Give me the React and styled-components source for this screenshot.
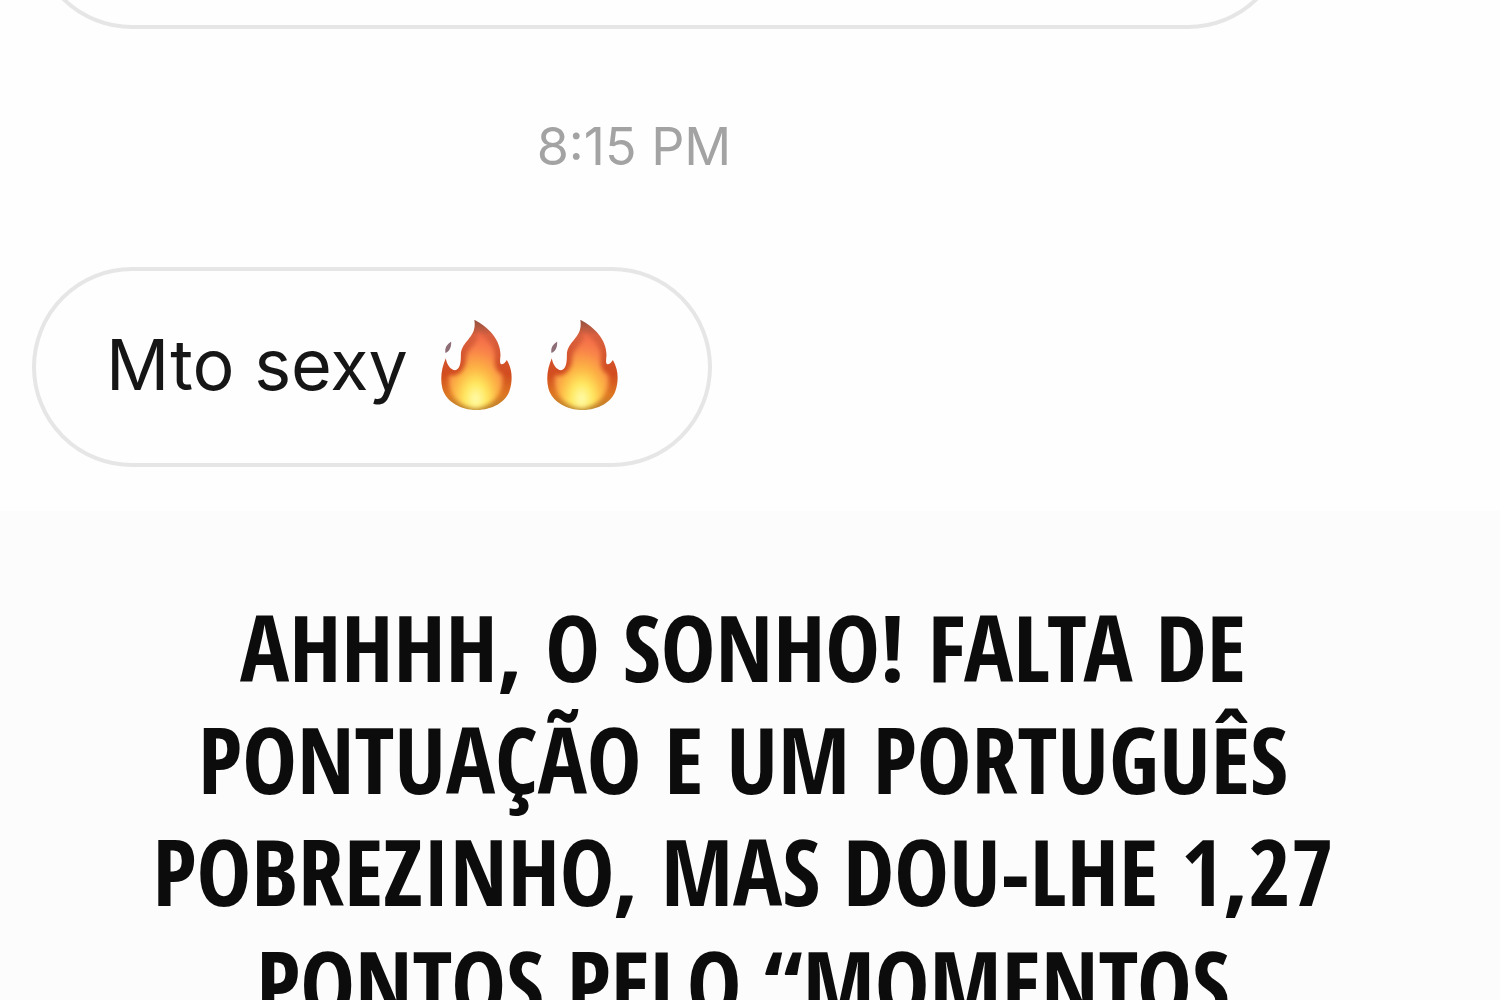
import React from "react";
import styled, { createGlobalStyle } from "styled-components";

const GlobalStyle = createGlobalStyle`
  body {
    margin: 0;
    background: #fcfcfc;
  }
`;

const Page = styled.main`
  height: 100vh;
  overflow: hidden;
  color: #161616;
  font-family: Inter, "Liberation Sans", sans-serif;
`;

const Chat = styled.section`
  background: #fefefe;
  padding: 0 212px 44px 32px;
`;

// shows only the lower edge of a message scrolled off the top
const Scrolled = styled.div`
  display: flex;
  align-items: flex-end;
  height: 29px;
  overflow: hidden;
`;

const Bubble = styled.div`
  box-sizing: border-box;
  display: flex;
  flex-shrink: 0;
  align-items: center;
  gap: 32px;
  width: ${(props) => (props.$wide ? "100%" : "fit-content")};
  height: 200px;
  padding: 0 88px 4px 70px;
  border: 4px solid #e6e6e6;
  border-radius: 100px;
  background: #fefefe;
`;

const Time = styled.time`
  display: block;
  padding: 88px 52px 90px 0;
  color: #a3a3a3;
  font-size: 52px;
  line-height: 60px;
  text-align: center;
`;

const Message = styled.span`
  font-size: 70px;
  line-height: 88px;
`;

const Flame = styled.svg`
  display: block;
  width: 74px;
  height: 92px;
`;

const Caption = styled.p`
  margin: 0;
  padding: 80px 14px 0 0;
  color: #0c0c0c;
  font-family: "Noto Sans ExtraCondensed", "Open Sans Condensed", "Roboto Condensed", "Liberation Sans Narrow", sans-serif;
  font-size: 92px;
  font-weight: 700;
  line-height: 112px;
  text-align: center;
  white-space: nowrap;
`;

const lines = [
  "AHHHH, O SONHO! FALTA DE",
  "PONTUAÇÃO E UM PORTUGUÊS",
  "POBREZINHO, MAS DOU-LHE 1,27",
  "PONTOS PELO “MOMENTOS",
];

function Fire({ id }) {
  return (
    <Flame viewBox="0 0 220 274" role="img" aria-label="fire">
      <defs>
        <linearGradient id={`${id}-body`} x1="0" y1="0" x2="0" y2="1">
          <stop offset="0" stopColor="#8f5040" />
          <stop offset="0.18" stopColor="#d9603f" />
          <stop offset="0.6" stopColor="#d14c1f" />
          <stop offset="0.82" stopColor="#dd7622" />
          <stop offset="1" stopColor="#b98a30" />
        </linearGradient>
        <radialGradient id={`${id}-core`} cx="0.5" cy="0.87" r="0.8">
          <stop offset="0" stopColor="#fffcae" />
          <stop offset="0.25" stopColor="#ffe860" />
          <stop offset="0.5" stopColor="#fdb544" />
          <stop offset="0.8" stopColor="#f98348" />
          <stop offset="1" stopColor="#f46d48" />
        </radialGradient>
        <filter id={`${id}-soft`}>
          <feGaussianBlur stdDeviation="7" />
        </filter>
        <clipPath id={`${id}-shape`}>
          <path d="M102 2C145 24 180 62 180 107C179 122 177 130 182 135C190 135 195 128 199 122C217 154 216 184 207 213C196 248 155 271 109 271C62 271 18 247 7 207C-1 176 5 145 17 117C21 137 30 151 45 153C61 148 62 128 62 105C65 62 111 56 102 2Z" />
        </clipPath>
      </defs>
      <g clipPath={`url(#${id}-shape)`}>
        <rect width="220" height="274" fill={`url(#${id}-body)`} />
        <path
          d="M112 40C146 60 166 88 163 116C160 138 168 160 184 164C194 202 173 256 109 267C51 264 18 218 27 167C56 176 78 149 78 115C83 80 117 76 112 40Z"
          fill={`url(#${id}-core)`}
          filter={`url(#${id}-soft)`}
        />
      </g>
      <path d="M33 67C34 83 29 96 16 101C13 85 21 76 33 67Z" fill="#8d6d76" />
    </Flame>
  );
}

function App() {
  return (
    <>
      <GlobalStyle />
      <Page>
        <Chat>
          <Scrolled>
            <Bubble $wide />
          </Scrolled>
          <Time>8:15 PM</Time>
          <Bubble>
            <Message>Mto sexy</Message>
            <Fire id="first" />
            <Fire id="second" />
          </Bubble>
        </Chat>
        <Caption>
          {lines.map((line) => (
            <React.Fragment key={line}>
              {line}
              <br />
            </React.Fragment>
          ))}
        </Caption>
      </Page>
    </>
  );
}

export default App;
